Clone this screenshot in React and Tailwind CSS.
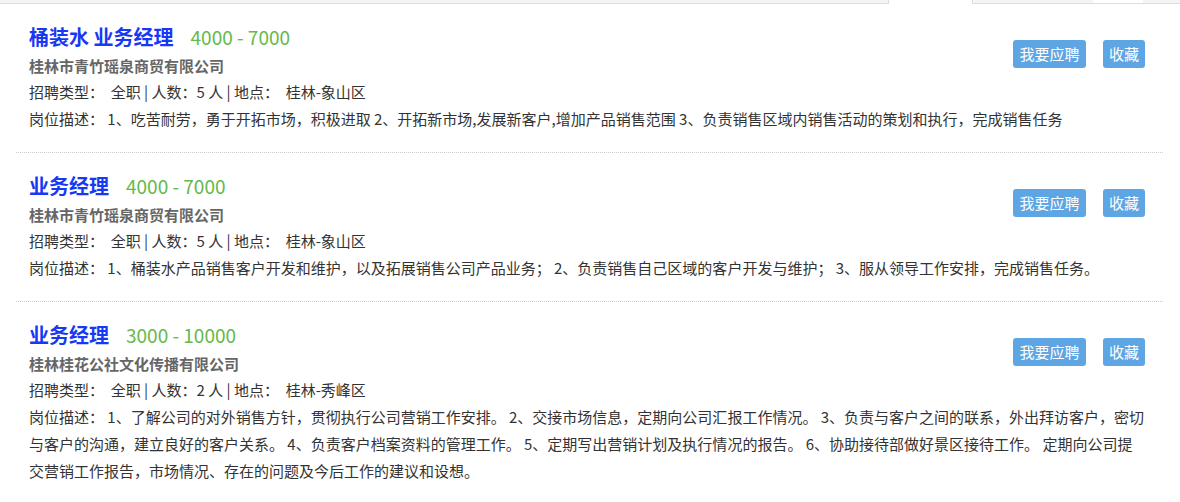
import React from "react";

const font = { fontFamily: '"Microsoft YaHei", "Noto Sans CJK SC", "Noto Sans", sans-serif' };

const jobs = [
  {
    title: "桶装水 业务经理",
    salary: "4000 - 7000",
    company: "桂林市青竹瑶泉商贸有限公司",
    count: "5",
    place: "桂林-象山区",
    desc: [
      "岗位描述： 1、吃苦耐劳，勇于开拓市场，积极进取 2、开拓新市场,发展新客户,增加产品销售范围 3、负责销售区域内销售活动的策划和执行，完成销售任务",
    ],
  },
  {
    title: "业务经理",
    salary: "4000 - 7000",
    company: "桂林市青竹瑶泉商贸有限公司",
    count: "5",
    place: "桂林-象山区",
    desc: [
      "岗位描述： 1、桶装水产品销售客户开发和维护，以及拓展销售公司产品业务； 2、负责销售自己区域的客户开发与维护； 3、服从领导工作安排，完成销售任务。",
    ],
  },
  {
    title: "业务经理",
    salary: "3000 - 10000",
    company: "桂林桂花公社文化传播有限公司",
    count: "2",
    place: "桂林-秀峰区",
    desc: [
      "岗位描述： 1、了解公司的对外销售方针，贯彻执行公司营销工作安排。 2、交接市场信息，定期向公司汇报工作情况。 3、负责与客户之间的联系，外出拜访客户，密切",
      "与客户的沟通，建立良好的客户关系。 4、负责客户档案资料的管理工作。 5、定期写出营销计划及执行情况的报告。 6、协助接待部做好景区接待工作。 定期向公司提",
      "交营销工作报告，市场情况、存在的问题及今后工作的建议和设想。",
    ],
  },
];

function Job({ job }) {
  return (
    <div className="flex border-b border-dotted border-[#cccccc] pl-[13px] pr-[18px] pt-[17px] pb-[20px]">
      <div className="flex-1 min-w-0">
        <div className="flex items-baseline h-[32px] leading-[32px]">
          <span className="text-[20px] font-bold text-[#1838f4]">{job.title}</span>
          <span className="ml-[17px] text-[19px] text-[#64b94a]">{job.salary}</span>
        </div>
        <div className="text-[15px] font-bold leading-[26px] text-[#666666]">{job.company}</div>
        <div className="text-[15px] leading-[26px] text-[#333333] whitespace-pre">
          {"招聘类型：  全职 | 人数：5 人 | 地点：  桂林-象山区".replace("5", job.count).replace("桂林-象山区", job.place)}
        </div>
        <div className="text-[15px] leading-[27px] text-[#333333]">
          {job.desc.map((l, i) => (
            <div key={i} className="whitespace-nowrap">{l}</div>
          ))}
        </div>
      </div>
      <div className="flex gap-[17px] pt-[19px] shrink-0">
        <button className="h-[28px] w-[73px] rounded-[3px] bg-[#5ea6e3] text-[15px] leading-[28px] text-white">我要应聘</button>
        <button className="h-[28px] w-[42px] rounded-[3px] bg-[#5ea6e3] text-[15px] leading-[28px] text-white">收藏</button>
      </div>
    </div>
  );
}

export default function App() {
  return (
    <div className="w-[1180px] h-[502px] overflow-hidden bg-white" style={font}>
      <div className="flex h-[4px]">
        <div className="w-[888px] bg-[#f4f4f4] border-b border-[#dddddd]" />
        <div className="w-[85px] bg-white border-x border-[#dddddd]" />
        <div className="w-[120px] bg-[#f4f4f4] border-b border-[#dddddd]" />
        <div className="w-[50px] bg-white border-b border-[#dddddd]" />
        <div className="flex-1 bg-[#f4f4f4] border-b border-[#dddddd]" />
      </div>
      <div className="pl-[16px] pr-[17px]">
        {jobs.map((j, i) => (
          <Job key={i} job={j} />
        ))}
      </div>
    </div>
  );
}
